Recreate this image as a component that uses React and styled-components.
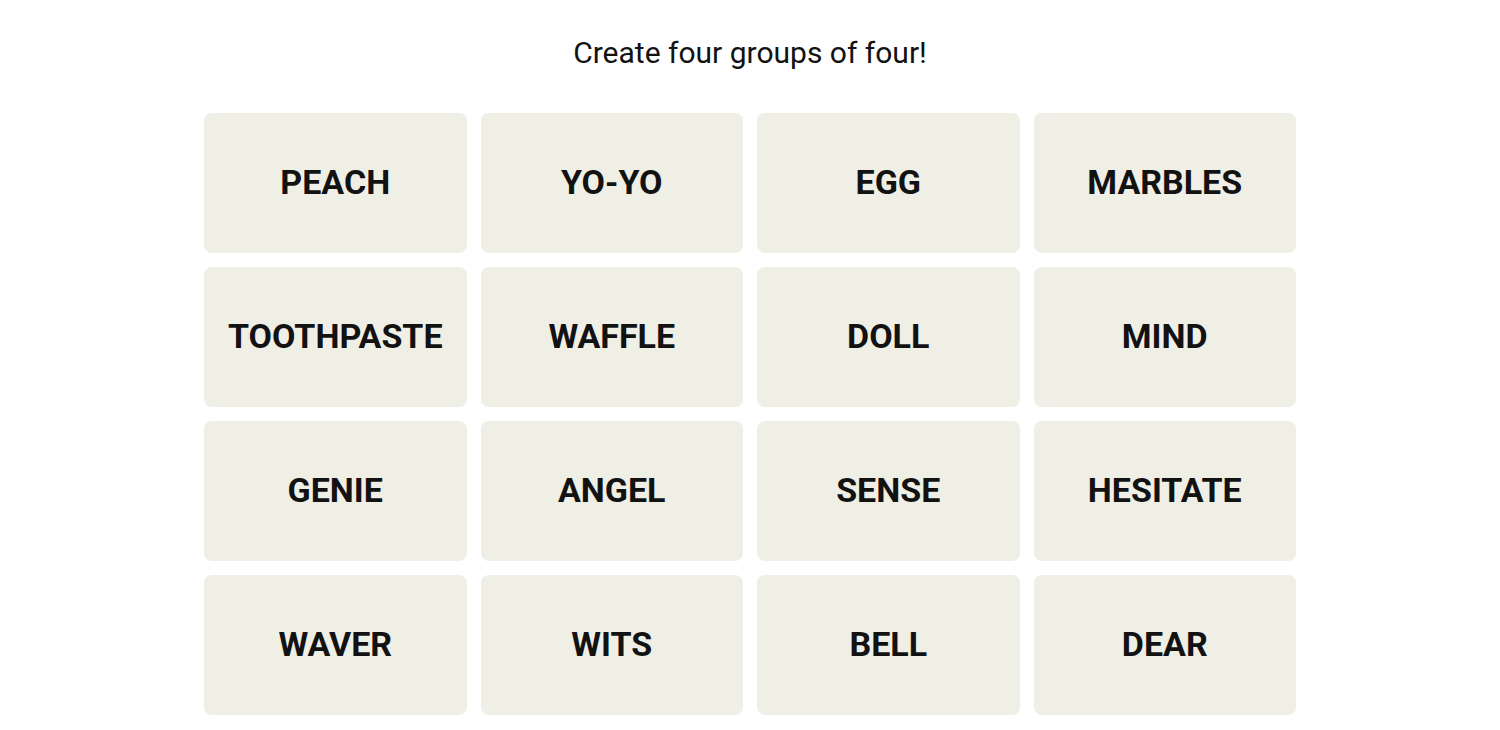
import React from "react";
import styled, { createGlobalStyle } from "styled-components";

const words = [
  "PEACH", "YO-YO", "EGG", "MARBLES",
  "TOOTHPASTE", "WAFFLE", "DOLL", "MIND",
  "GENIE", "ANGEL", "SENSE", "HESITATE",
  "WAVER", "WITS", "BELL", "DEAR"
];

export default function App() {
  return (
    <>
      <GlobalStyle />
      <Board>
        <Prompt>Create four groups of four!</Prompt>
        <Grid>
          {words.map(word => (
            <Tile key={word}>{word}</Tile>
          ))}
        </Grid>
      </Board>
    </>
  );
}

const GlobalStyle = createGlobalStyle`
  body {
    margin: 0;
    background: #fff;
    color: #121212;
    font-family: Roboto, "Liberation Sans", sans-serif;
  }
`;

const Board = styled.main`
  display: flex;
  flex-direction: column;
  align-items: center;
  padding-top: 36px;
`;

const Prompt = styled.h1`
  margin: 0 0 43px;
  font-size: 30px;
  line-height: 34px;
  font-weight: 400;
  color: #121212;
`;

const Grid = styled.div`
  display: grid;
  width: 1092px;
  grid-template-columns: repeat(4, 1fr);
  grid-auto-rows: 140px;
  gap: 14px;
`;

const Tile = styled.button`
  display: flex;
  align-items: center;
  justify-content: center;
  padding: 0 0 2px;
  border: none;
  border-radius: 8px;
  background: #efefe6;
  color: #121212;
  font-family: Roboto, "Liberation Sans", sans-serif;
  font-size: 34px;
  font-weight: 700;
  cursor: pointer;
`;
